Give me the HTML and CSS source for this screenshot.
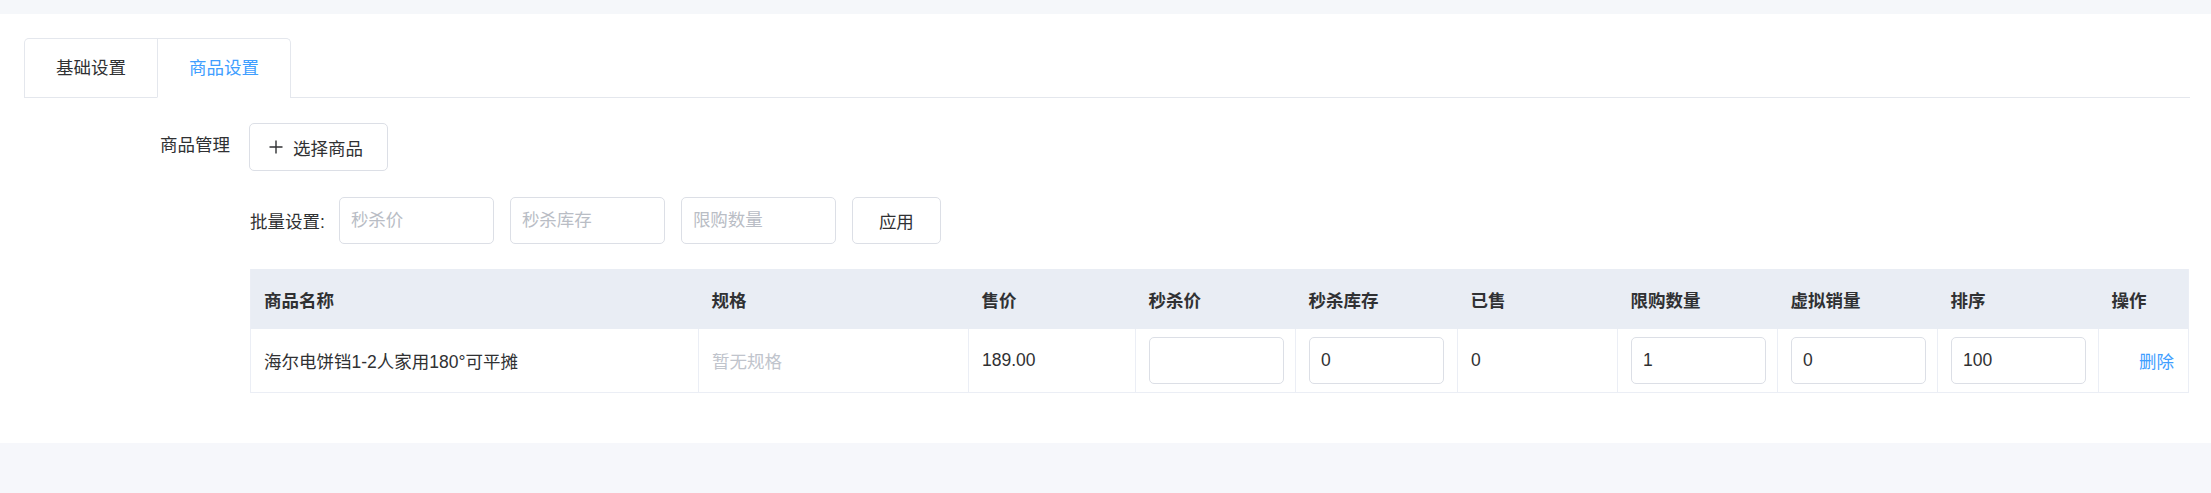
FILE: index.html
```html
<!DOCTYPE html>
<html lang="zh-CN">
<head>
<meta charset="utf-8">
<title>商品设置</title>
<link rel="stylesheet" href="styles.css">
</head>
<body>
<div class="top-band"></div>
<div class="card">
  <div class="tabs-header">
    <div class="tabs-nav">
      <div class="tab">基础设置</div>
      <div class="tab active">商品设置</div>
    </div>
  </div>

  <div class="form-item">
    <div class="form-label">商品管理</div>
    <div class="form-content">
      <button class="btn btn-select">
        <svg class="plus" viewBox="0 0 14 14" width="14" height="14"><path d="M7 0.5V13.5M0.5 7H13.5" stroke="#303133" stroke-width="1.4" fill="none"/></svg>
        <span>选择商品</span>
      </button>
    </div>
  </div>

  <div class="form-body">
    <div class="batch-row">
      <span class="batch-label">批量设置:</span>
      <input class="input batch-input" placeholder="秒杀价">
      <input class="input batch-input" placeholder="秒杀库存">
      <input class="input batch-input" placeholder="限购数量">
      <button class="btn btn-apply">应用</button>
    </div>

    <table class="goods-table">
      <colgroup>
        <col class="c-name"><col class="c-spec"><col class="c-price"><col class="c-seck">
        <col class="c-stock"><col class="c-sold"><col class="c-limit"><col class="c-virtual">
        <col class="c-sort"><col class="c-op">
      </colgroup>
      <thead>
        <tr>
          <th>商品名称</th><th>规格</th><th>售价</th><th>秒杀价</th><th>秒杀库存</th>
          <th>已售</th><th>限购数量</th><th>虚拟销量</th><th>排序</th><th>操作</th>
        </tr>
      </thead>
      <tbody>
        <tr>
          <td>海尔电饼铛1-2人家用180°可平摊</td>
          <td class="muted">暂无规格</td>
          <td>189.00</td>
          <td><input class="input cell-input" value=""></td>
          <td><input class="input cell-input" value="0"></td>
          <td>0</td>
          <td><input class="input cell-input" value="1"></td>
          <td><input class="input cell-input" value="0"></td>
          <td><input class="input cell-input" value="100"></td>
          <td class="op"><a class="link">删除</a></td>
        </tr>
      </tbody>
    </table>
  </div>
</div>
<div class="bottom-band"></div>
</body>
</html>
```
FILE: styles.css
```css
html, body {
  margin: 0;
  padding: 0;
  background: #f6f7fb;
  font-family: "Liberation Sans", "Noto Sans CJK SC", sans-serif;
  font-size: 17.5px;
  color: #303133;
}

.top-band {
  height: 14px;
  background: #f5f7fa;
}

.card {
  background: #ffffff;
  height: 429px;
  box-sizing: border-box;
  padding: 24px 21px 0 24px;
}

.tabs-header {
  border-bottom: 1px solid #e4e7ed;
  display: flex;
}

.tabs-nav {
  display: flex;
  border: 1px solid #e4e7ed;
  border-bottom: none;
  border-radius: 5px 5px 0 0;
  margin-bottom: -1px;
}

.tab {
  height: 58px;
  line-height: 58px;
  padding: 0 31px;
  color: #303133;
  border-bottom: 1px solid transparent;
}

.tab + .tab {
  border-left: 1px solid #e4e7ed;
}

.tab.active {
  color: #409eff;
  border-bottom-color: #ffffff;
}

.form-item {
  display: flex;
  margin-top: 25px;
  gap: 19px;
}

.form-label {
  width: 206px;
  text-align: right;
  line-height: 44px;
  color: #303133;
}

.btn {
  font-family: inherit;
  font-size: 17.5px;
  color: #303133;
  background: #ffffff;
  border: 1px solid #dcdfe6;
  border-radius: 5px;
  box-sizing: border-box;
  cursor: pointer;
}

.btn-select {
  width: 139px;
  height: 48px;
  display: flex;
  align-items: center;
  padding: 0 0 0 19px;
  gap: 10px;
}

.plus {
  display: block;
}

.form-body {
  margin-left: 226px;
}

.batch-row {
  display: flex;
  align-items: center;
  margin-top: 26px;
  height: 47px;
}

.batch-label {
  margin-right: 14px;
  white-space: nowrap;
}

.input {
  font-family: inherit;
  font-size: 17.5px;
  color: #303133;
  border: 1px solid #dcdfe6;
  border-radius: 5px;
  box-sizing: border-box;
  background: #ffffff;
  outline: none;
  padding: 0 11px;
}

.input::placeholder {
  color: #b9bdc5;
}

.batch-input {
  width: 155px;
  height: 47px;
  margin-right: 16px;
}

.btn-apply {
  width: 89px;
  height: 47px;
}

.goods-table {
  margin-top: 25px;
  width: 1938px;
  table-layout: fixed;
  border-collapse: collapse;
  border-left: 1px solid #ebeef5;
  border-right: 1px solid #ebeef5;
}

.c-name { width: 448px; }
.c-spec { width: 270px; }
.c-price { width: 167px; }
.c-seck { width: 160px; }
.c-stock { width: 162px; }
.c-sold { width: 160px; }
.c-limit { width: 160px; }
.c-virtual { width: 160px; }
.c-sort { width: 161px; }
.c-op { width: 90px; }

.goods-table th {
  background: #e9edf4;
  height: 60px;
  padding: 0 13px;
  text-align: left;
  font-weight: 700;
  color: #303133;
  box-sizing: border-box;
}

.goods-table td {
  height: 63px;
  padding: 0 13px;
  box-sizing: border-box;
  border-right: 1px solid #ebeef5;
  border-bottom: 1px solid #ebeef5;
  color: #303133;
  white-space: nowrap;
}

.goods-table td:last-child {
  border-right: none;
}

.goods-table td.muted {
  color: #c0c4cc;
}

.goods-table td.op {
  text-align: right;
  padding-right: 14px;
}

.cell-input {
  width: 135px;
  height: 47px;
  display: block;
}

.link {
  color: #409eff;
  cursor: pointer;
}

.bottom-band {
  height: 50px;
  background: #f6f7fb;
}
```
